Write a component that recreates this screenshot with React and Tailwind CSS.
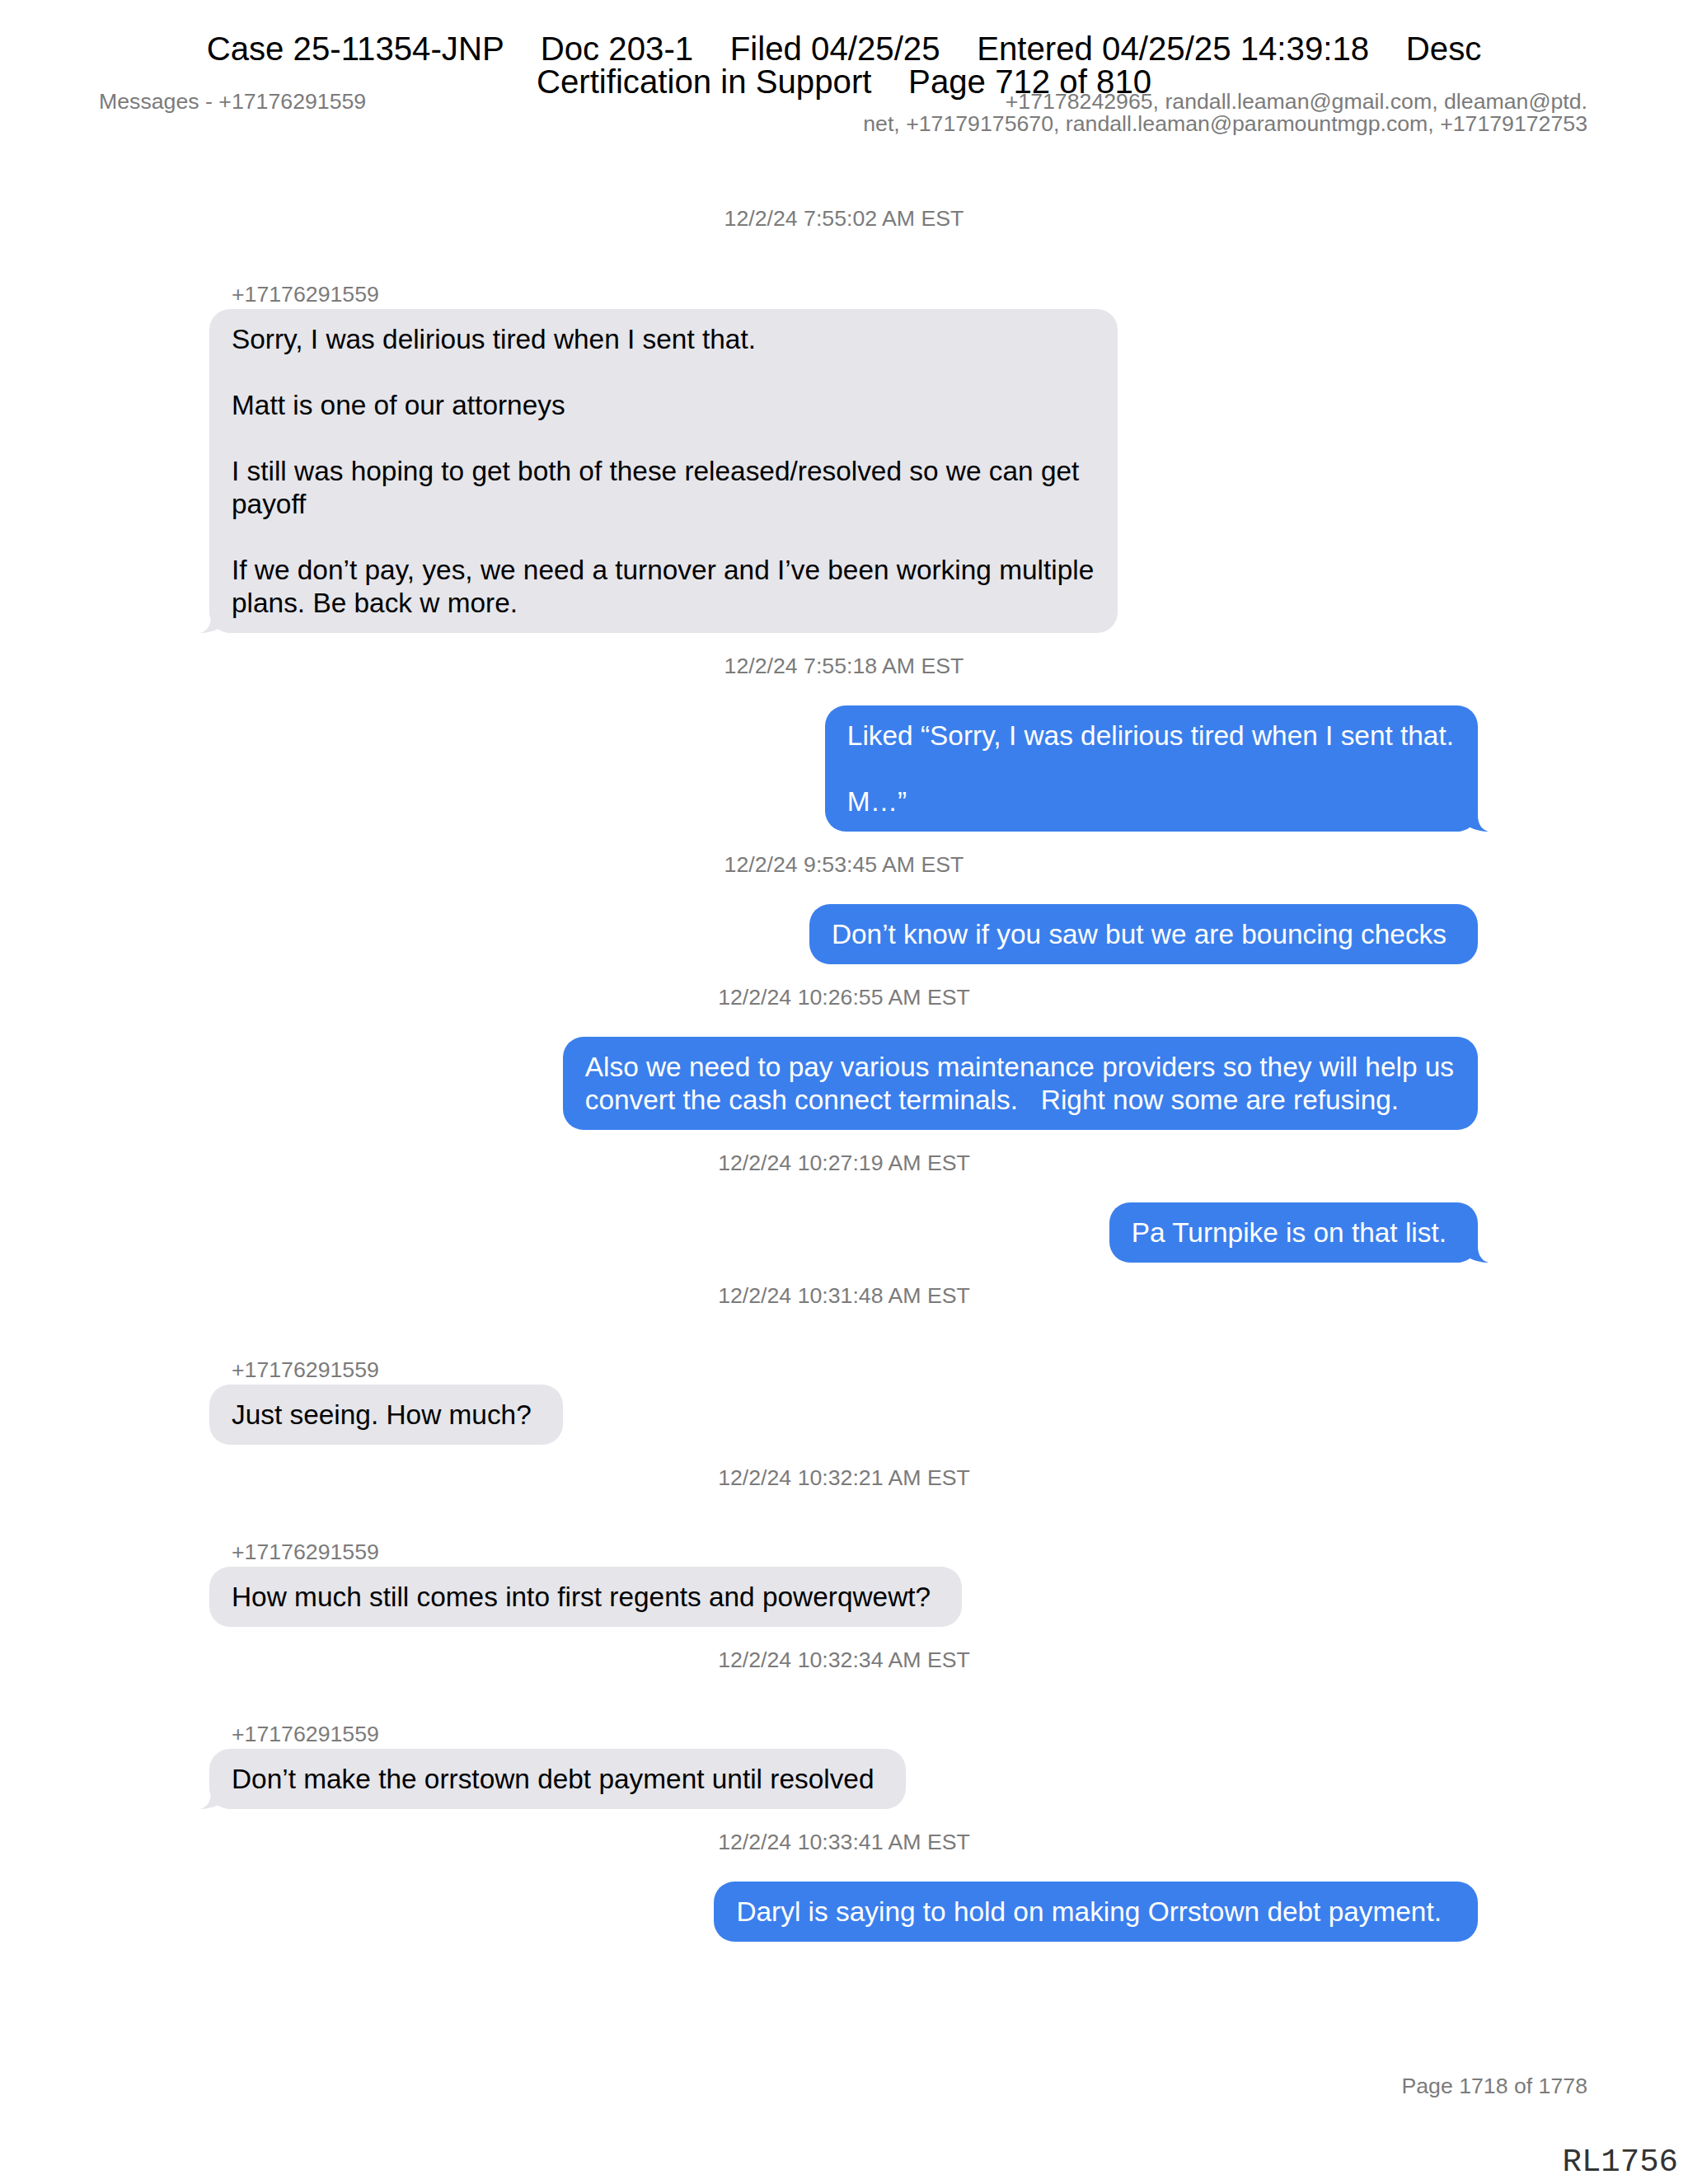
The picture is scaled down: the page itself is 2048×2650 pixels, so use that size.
import React from "react";

const SANS = { fontFamily: '"Liberation Sans", Arial, sans-serif' };

function Tail({ side, color }) {
  const isRight = side === "right";
  return (
    <svg
      width="38"
      height="35"
      viewBox="0 0 38 35"
      className={
        isRight
          ? "absolute bottom-0 right-[-13px]"
          : "absolute bottom-0 left-[-11px] -scale-x-100"
      }
    >
      <path
        d="M0 35 L0 0 L25 0 L25 15 C25 26 30 33 38 35 C31 35 21 33 14 29 C10 32 5 35 0 35 Z"
        fill={color}
      />
    </svg>
  );
}

function Bubble({ out, tail, children, pr = "pr-[38px]", mt }) {
  const color = out ? "#3b7fed" : "#e5e5ea";
  return (
    <div className={`flex ${out ? "justify-end" : "justify-start"} ${mt}`}>
      <div
        className={`relative rounded-[25px] pl-[27px] ${pr} py-[16.5px] text-[33.4px] leading-[40px] whitespace-pre ${
          out ? "bg-[#3b7fed] text-white" : "bg-[#e5e5ea] text-black"
        }`}
      >
        {tail && <Tail side={out ? "right" : "left"} color={color} />}
        <span className="relative">{children}</span>
      </div>
    </div>
  );
}

function Stamp({ children, mt }) {
  return (
    <div className={`text-center text-[26.7px] leading-[30px] text-[#7b7b7b] ${mt}`}>
      {children}
    </div>
  );
}

function Sender({ mt = "mt-[60px]" }) {
  return (
    <div className={`pl-[27px] text-[26.7px] leading-[30px] text-[#7b7b7b] ${mt}`}>
      +17176291559
    </div>
  );
}

export default function App() {
  return (
    <div className="relative w-[2048px] h-[2650px] bg-white overflow-hidden" style={SANS}>
      {/* court filing stamp overlay */}
      <div className="absolute left-0 right-0 top-[40px] z-10 text-center text-[40.2px] leading-[40px] text-black whitespace-pre">
        <div>{"Case 25-11354-JNP    Doc 203-1    Filed 04/25/25    Entered 04/25/25 14:39:18    Desc"}</div>
        <div>{"Certification in Support    Page 712 of 810"}</div>
      </div>

      <div className="flex flex-col">
        {/* meta row */}
        <div className="flex justify-between pl-[120px] pr-[122px] pt-[110px] text-[26.7px] leading-[27px] text-[#7b7b7b]">
          <div>Messages - +17176291559</div>
          <div className="text-right">
            <div>+17178242965, randall.leaman@gmail.com, dleaman@ptd.</div>
            <div>net, +17179175670, randall.leaman@paramountmgp.com, +17179172753</div>
          </div>
        </div>

        {/* conversation */}
        <div className="flex flex-col">
          <Stamp mt="mt-[86px]">12/2/24 7:55:02 AM EST</Stamp>
          <div className="flex flex-col pl-[254px] pr-[255px]">
            <Sender mt="mt-[62px]" />
            <Bubble out={false} tail mt="mt-[3px]" pr="pr-[29px]">
              {"Sorry, I was delirious tired when I sent that.\n\nMatt is one of our attorneys\n\nI still was hoping to get both of these released/resolved so we can get\npayoff\n\nIf we don\u2019t pay, yes, we need a turnover and I\u2019ve been working multiple\nplans. Be back w more."}
            </Bubble>
          </div>

          <Stamp mt="mt-[25px]">12/2/24 7:55:18 AM EST</Stamp>
          <div className="flex flex-col pl-[254px] pr-[255px]">
            <Bubble out tail mt="mt-[33px]" pr="pr-[29px]">
              {"Liked \u201cSorry, I was delirious tired when I sent that.\n\nM\u2026\u201d"}
            </Bubble>
          </div>

          <Stamp mt="mt-[25px]">12/2/24 9:53:45 AM EST</Stamp>
          <div className="flex flex-col pl-[254px] pr-[255px]">
            <Bubble out mt="mt-[33px]">
              Don’t know if you saw but we are bouncing checks
            </Bubble>
          </div>

          <Stamp mt="mt-[25px]">12/2/24 10:26:55 AM EST</Stamp>
          <div className="flex flex-col pl-[254px] pr-[255px]">
            <Bubble out mt="mt-[33px]" pr="pr-[29px]">
              {"Also we need to pay various maintenance providers so they will help us\nconvert the cash connect terminals.   Right now some are refusing."}
            </Bubble>
          </div>

          <Stamp mt="mt-[25px]">12/2/24 10:27:19 AM EST</Stamp>
          <div className="flex flex-col pl-[254px] pr-[255px]">
            <Bubble out tail mt="mt-[33px]">
              Pa Turnpike is on that list.
            </Bubble>
          </div>

          <Stamp mt="mt-[25px]">12/2/24 10:31:48 AM EST</Stamp>
          <div className="flex flex-col pl-[254px] pr-[255px]">
            <Sender />
            <Bubble out={false} mt="mt-[3px]">
              Just seeing. How much?
            </Bubble>
          </div>

          <Stamp mt="mt-[25px]">12/2/24 10:32:21 AM EST</Stamp>
          <div className="flex flex-col pl-[254px] pr-[255px]">
            <Sender />
            <Bubble out={false} mt="mt-[3px]">
              How much still comes into first regents and powerqwewt?
            </Bubble>
          </div>

          <Stamp mt="mt-[25px]">12/2/24 10:32:34 AM EST</Stamp>
          <div className="flex flex-col pl-[254px] pr-[255px]">
            <Sender />
            <Bubble out={false} tail mt="mt-[3px]">
              Don’t make the orrstown debt payment until resolved
            </Bubble>
          </div>

          <Stamp mt="mt-[25px]">12/2/24 10:33:41 AM EST</Stamp>
          <div className="flex flex-col pl-[254px] pr-[255px]">
            <Bubble out mt="mt-[33px]" pr="pr-[44px]">
              Daryl is saying to hold on making Orrstown debt payment.
            </Bubble>
          </div>
        </div>

        {/* footer */}
        <div className="mt-[160px] pr-[122px] text-right text-[26.7px] leading-[30px] text-[#7b7b7b]">
          Page 1718 of 1778
        </div>
        <div
          className="mt-[58px] pr-[12px] text-right text-[39px] leading-[40px] text-[#333]"
          style={{ fontFamily: '"Liberation Mono", "Courier New", monospace' }}
        >
          RL1756
        </div>
      </div>
    </div>
  );
}
